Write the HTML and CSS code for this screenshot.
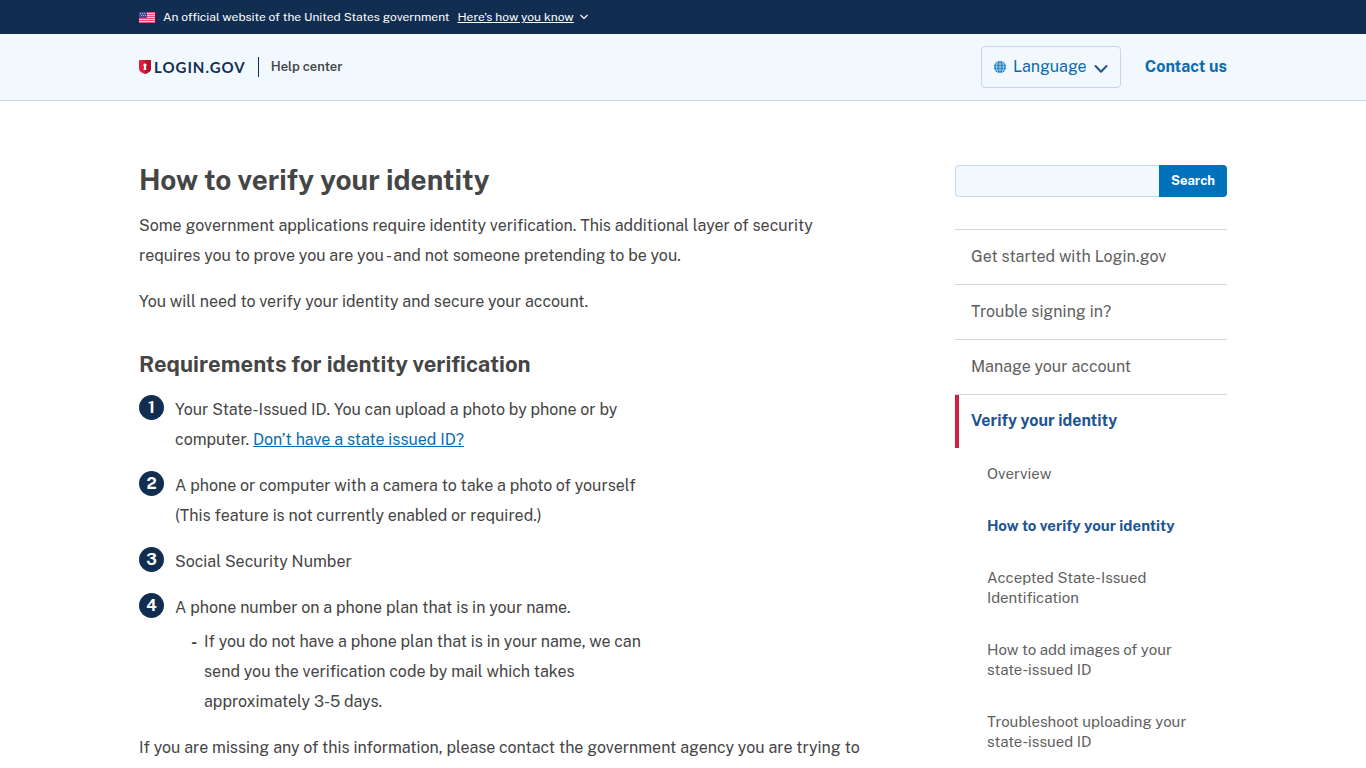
FILE: index.html
```
<!DOCTYPE html>
<html lang="en">
<head>
    <meta charset="UTF-8">
    <meta name="viewport" content="width=device-width, initial-scale=1.0">
    <title>How to verify your identity | Login.gov</title>
    <link rel="stylesheet" href="styles.css">
</head>
<body>
    <div class="banner">
        <div class="container banner-inner">
            <svg class="flag" viewBox="0 0 16 11" width="16" height="11" aria-hidden="true">
                <path fill="#e8c9d0" d="M0 0h16v11H0z"/>
                <path fill="#e0526a" d="M0 0h16v1H0zM0 2h16v1H0zM0 4h16v1H0zM0 6h16v1H0zM0 8h16v1H0zM0 10h16v1H0z"/>
                <path fill="#3f4f92" d="M0 0h8v6H0z"/>
                <path fill="#a9b3d8" d="M1 1h1v1H1zM3 1h1v1H3zM5 1h1v1H5zM2 3h1v1H2zM4 3h1v1H4zM6 3h1v1H6z"/>
            </svg>
            <span>An official website of the United States government</span>
            <button class="banner-button" type="button">
                <span>Here’s how you know</span>
                <svg viewBox="0 0 8 6" width="8" height="6" aria-hidden="true"><path d="M.5 1L4 4.500 7.500 1" fill="none" stroke="currentColor" stroke-width="1.2"/></svg>
            </button>
        </div>
    </div>
    <header class="header">
        <div class="container header-inner">
            <div class="brand">
                <a class="logo" href="#">
                    <svg viewBox="0 0 12 14" width="12" height="14" aria-hidden="true">
                        <path fill="#e21c3d" d="M1 0h10a1 1 0 0 1 1 1v7.500c0 3-3 4.500-6 5.500-3-1-6-2.500-6-5.500V1a1 1 0 0 1 1-1z"/>
                        <path fill="#b3152e" d="M6 0h5a1 1 0 0 1 1 1v7.500c0 3-3 4.500-6 5.500z"/>
                        <path fill="#fff" d="M6 3.500a1.700 1.700 0 0 1 .9 3.100L7.400 10H4.600l.5-3.400A1.700 1.700 0 0 1 6 3.500z"/>
                    </svg>
                    <span>LOGIN.GOV</span>
                </a>
                <a class="help" href="#">Help center</a>
            </div>
            <nav class="header-nav">
                <button class="language" type="button">
                    <svg viewBox="0 0 12 12" width="12" height="12" aria-hidden="true">
                        <circle cx="6" cy="6" r="6" fill="#0b76bd"/>
                        <path d="M6 0v12M0 6h12M1.200 3h9.600M1.200 9h9.600M3.500 1C2.200 4 2.200 8 3.500 11M8.500 1c1.300 3 1.300 7 0 10" fill="none" stroke="#d5eaf8" stroke-width=".7"/>
                    </svg>
                    <span>Language</span>
                    <svg class="chevron" viewBox="0 0 14 10" width="14" height="10" aria-hidden="true"><path d="M1.500 2L7 7.700 12.500 2" fill="none" stroke="#205493" stroke-width="2" stroke-linecap="round" stroke-linejoin="round"/></svg>
                </button>
                <a class="contact" href="#">Contact us</a>
            </nav>
        </div>
    </header>
    <div class="container layout">
        <main class="content">
            <h1>How to verify your identity</h1>
            <p>Some government applications require identity verification. This additional layer of security requires you to prove you are you - and not someone pretending to be you.</p>
            <p>You will need to verify your identity and secure your account.</p>
            <h2>Requirements for identity verification</h2>
            <ol class="steps">
                <li>Your State-Issued ID. You can upload a photo by phone or by computer. <a href="#">Don’t have a state issued ID?</a></li>
                <li>A phone or computer with a camera to take a photo of yourself (This feature is not currently enabled or required.)</li>
                <li>Social Security Number</li>
                <li>A phone number on a phone plan that is in your name.
                    <ul>
                        <li>If you do not have a phone plan that is in your name, we can send you the verification code by mail which takes approximately 3-5 days.</li>
                    </ul>
                </li>
            </ol>
            <p>If you are missing any of this information, please contact the government agency you are trying to</p>
        </main>
        <aside class="sidebar">
            <form class="search" role="search">
                <input type="search" name="query" aria-label="Search">
                <button type="submit">Search</button>
            </form>
            <nav>
                <ul class="sidenav">
                    <li><a href="#">Get started with Login.gov</a></li>
                    <li><a href="#">Trouble signing in?</a></li>
                    <li><a href="#">Manage your account</a></li>
                    <li>
                        <a class="current" href="#">Verify your identity</a>
                        <ul class="subnav">
                            <li><a href="#">Overview</a></li>
                            <li><a class="active" href="#">How to verify your identity</a></li>
                            <li><a href="#">Accepted State-Issued Identification</a></li>
                            <li><a href="#">How to add images of your state-issued ID</a></li>
                            <li><a href="#">Troubleshoot uploading your state-issued ID</a></li>
                        </ul>
                    </li>
                </ul>
            </nav>
        </aside>
    </div>
</body>
</html>
```
FILE: styles.css
```
* {
    box-sizing: border-box;
}
body {
    margin: 0;
    font-family: "Public Sans", Inter, "Liberation Sans", sans-serif;
    font-size: 16px;
    line-height: 30px;
    color: #454545;
    background: #fff;
}
h1, h2, p, ul, ol {
    margin: 0;
    padding: 0;
}
ul, ol {
    list-style: none;
}
a {
    color: #0b6cad;
}
button, input {
    font: inherit;
}
button {
    cursor: pointer;
}
.container {
    max-width: 1152px;
    margin: 0 auto;
    padding: 0 32px;
}

/* government banner */
.banner {
    background: #112e51;
    color: #fff;
    font-size: 12px;
    line-height: 18px;
}
.banner-inner {
    display: flex;
    align-items: center;
    gap: 8px;
    height: 34px;
}
.banner-button {
    display: flex;
    align-items: center;
    gap: 6px;
    padding: 0;
    border: 0;
    background: none;
    color: #fff;
}
.banner-button span {
    text-decoration: underline;
}

/* header */
.header {
    background: #f1f9ff;
    border-bottom: 1px solid #c8dbe8;
}
.header-inner {
    display: flex;
    justify-content: space-between;
    align-items: center;
    padding-top: 12px;
    padding-bottom: 12px;
}
.header a {
    text-decoration: none;
}
.brand {
    display: flex;
    align-items: center;
    gap: 12px;
    line-height: 20px;
}
.logo {
    display: flex;
    align-items: center;
    gap: 3px;
    color: #112e51;
    font: 700 15px/20px Lato, sans-serif;
    letter-spacing: 1px;
}
.help {
    padding-left: 12px;
    border-left: 1px solid #112e51;
    color: #454545;
    font-size: 13px;
    font-weight: 600;
}
.header-nav {
    display: flex;
    align-items: center;
    gap: 24px;
}
.language {
    display: flex;
    align-items: center;
    gap: 7px;
    height: 42px;
    padding: 0 12px;
    border: 1px solid #c8d5e8;
    border-radius: 4px;
    background: none;
    color: #0b6cad;
}
.chevron {
    margin-top: 4px;
}
.contact {
    font-weight: 700;
}

/* page */
.layout {
    display: flex;
    justify-content: space-between;
    gap: 64px;
    padding-top: 64px;
}
.content {
    flex: 1;
    max-width: 736px;
}
.content p {
    margin-bottom: 16px;
}
h1 {
    margin-bottom: 16px;
    font-size: 28px;
    line-height: 30px;
}
h2 {
    margin: 32px 0 16px;
    font-size: 22px;
    line-height: 30px;
}
.steps {
    max-width: 508px;
    counter-reset: step;
}
.steps > li {
    position: relative;
    margin-bottom: 16px;
    padding-left: 36px;
    counter-increment: step;
}
.steps > li::before {
    content: counter(step);
    position: absolute;
    top: 0;
    left: 0;
    width: 25px;
    height: 25px;
    border-radius: 50%;
    background: #112e51;
    color: #fff;
    font-weight: 700;
    line-height: 25px;
    text-align: center;
}
.steps ul {
    margin-top: 4px;
    padding-left: 16px;
}
.steps ul li {
    display: flex;
}
.steps ul li::before {
    content: "-";
    flex: none;
    width: 13px;
    font-weight: 700;
}

/* sidebar */
.sidebar {
    flex: none;
    width: 25%;
}
.search {
    display: flex;
    height: 32px;
    margin-bottom: 32px;
}
.search input {
    flex: 1;
    min-width: 0;
    padding: 0 8px;
    border: 1px solid #c3dcee;
    border-right: 0;
    border-radius: 4px 0 0 4px;
    background: #f1f9ff;
}
.search button {
    width: 68px;
    padding: 0;
    border: 0;
    border-radius: 0 4px 4px 0;
    background: #0071bb;
    color: #fff;
    font-size: 13px;
    font-weight: 700;
}
.sidenav > li {
    border-top: 1px solid #d6d7d9;
}
.sidenav a {
    display: block;
    padding: 16px;
    color: #5f5f5f;
    line-height: 22px;
    text-decoration: none;
}
.sidenav .current {
    padding: 15px 12px 16px;
    border-left: 4px solid #cd2245;
    color: #205493;
    font-weight: 700;
}
.subnav .active,
.subnav a {
    padding-left: 32px;
    font-size: 15px;
    line-height: 20px;
}
.subnav .active {
    color: #205493;
    font-weight: 700;
}
```
